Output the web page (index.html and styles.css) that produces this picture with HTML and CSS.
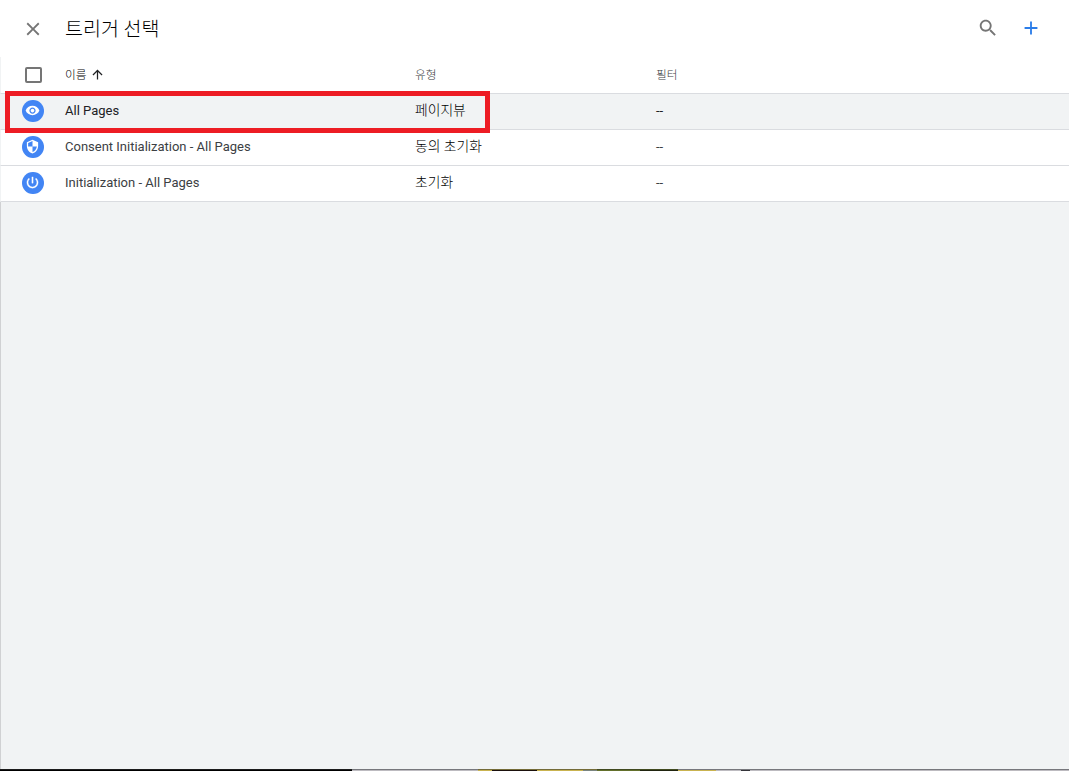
FILE: index.html
```html
<!DOCTYPE html>
<html lang="ko">
<head>
    <meta charset="UTF-8">
    <meta name="viewport" content="width=device-width, initial-scale=1.0">
    <title>트리거 선택</title>
    <link rel="stylesheet" href="styles.css">
</head>
<body>
    <div class="sheet">
        <header class="toolbar">
            <svg class="close" viewBox="0 0 24 24"><path d="M19 6.41L17.59 5 12 10.59 6.41 5 5 6.41 10.59 12 5 17.59 6.41 19 12 13.41 17.59 19 19 17.59 13.41 12z"/></svg>
            <h1>트리거 선택</h1>
            <svg class="search" viewBox="0 0 24 24"><path d="M15.5 14h-.79l-.28-.27C15.41 12.59 16 11.11 16 9.5 16 5.91 13.09 3 9.5 3S3 5.91 3 9.5 5.91 16 9.5 16c1.61 0 3.09-.59 4.23-1.57l.27.28v.79l5 4.99L20.49 19l-4.99-5zm-6 0C7.01 14 5 11.99 5 9.5S7.01 5 9.5 5 14 7.01 14 9.5 11.99 14 9.5 14z"/></svg>
            <svg class="add" viewBox="0 0 24 24"><path d="M19 13h-6v6h-2v-6H5v-2h6V5h2v6h6v2z"/></svg>
        </header>

        <div class="row head">
            <span class="checkbox"></span>
            <span class="sorted"><span>이름</span>
                <svg class="arrow" viewBox="0 0 24 24"><path d="M4 12l1.41 1.41L11 7.83V20h2V7.83l5.58 5.59L20 12l-8-8-8 8z"/></svg>
            </span>
            <span class="label">유형</span>
            <span class="label">필터</span>
        </div>
        <div class="row selected">
            <span class="badge">
                <svg viewBox="0 0 24 24"><path d="M12 4.500C7 4.500 2.730 7.610 1 12c1.730 4.390 6 7.500 11 7.500s9.270-3.110 11-7.500c-1.730-4.390-6-7.500-11-7.500zM12 17c-2.760 0-5-2.240-5-5s2.240-5 5-5 5 2.240 5 5-2.240 5-5 5zm0-8c-1.660 0-3 1.340-3 3s1.340 3 3 3 3-1.340 3-3-1.340-3-3-3z"/></svg>
            </span>
            <span>All Pages</span>
            <span class="type">페이지뷰</span>
            <span>--</span>
            <div class="highlight"></div>
        </div>
        <div class="row">
            <span class="badge">
                <svg viewBox="0 0 24 24"><path d="M12 1L3 5v6c0 5.550 3.840 10.740 9 12 5.160-1.260 9-6.450 9-12V5l-9-4zm0 10.990h7c-.53 4.120-3.280 7.790-7 8.940V12H5V6.300l7-3.110v8.800z"/></svg>
            </span>
            <span>Consent Initialization - All Pages</span>
            <span class="type">동의 초기화</span>
            <span>--</span>
        </div>
        <div class="row">
            <span class="badge">
                <svg class="power" viewBox="0 0 24 24"><path d="M13 3h-2v10h2V3zm4.830 2.170l-1.420 1.420C17.990 7.860 19 9.810 19 12c0 3.870-3.130 7-7 7s-7-3.130-7-7c0-2.190 1.010-4.140 2.580-5.420L6.170 5.170C4.230 6.820 3 9.260 3 12c0 4.970 4.030 9 9 9s9-4.030 9-9c0-2.740-1.230-5.180-3.170-6.830z"/></svg>
            </span>
            <span>Initialization - All Pages</span>
            <span class="type">초기화</span>
            <span>--</span>
        </div>

        <main class="empty"></main>
        <footer class="edge"></footer>
    </div>
</body>
</html>
```

FILE: styles.css
```css
* { box-sizing: border-box; margin: 0; padding: 0; }
body {
    font-family: Roboto, "Noto Sans CJK KR", sans-serif;
    font-size: 13px;
    color: #3c4043;
    background: #fff;
}
.sheet {
    display: flex;
    flex-direction: column;
    height: 100vh;
    overflow: hidden;
}
svg {
    display: block;
    fill: #757575;
}
.toolbar {
    display: flex;
    align-items: center;
    height: 57px;
    padding: 0 28px 0 22px;
}
.close {
    width: 22px;
    height: 22px;
}
h1 {
    flex: 1;
    margin-left: 21px;
    padding-top: 2px;
    font-size: 19.5px;
    font-weight: 300;
    line-height: 24px;
    color: #000;
}
.search {
    width: 22px;
    height: 22px;
    margin: 0 21px 2px 0;
}
.toolbar .add {
    width: 22px;
    height: 22px;
    margin: 0 -.5px 1px 0;
    fill: #2b7de9;
}
.row {
    position: relative;
    display: grid;
    grid-template-columns: 43px 350px 241px 1fr;
    align-items: center;
    height: 36px;
    padding: 0 0 2px 21px;
    border-bottom: 1px solid #dadce0;
    border-left: 1px solid #f1f3f4;
}
.head {
    height: 37px;
    font-size: 11.7px;
    font-weight: 300;
    color: #3c4043;
}
.label, .sorted span {
    padding-bottom: 2px;
}
.sorted {
    display: flex;
    align-items: center;
    gap: 3px;
    color: #000;
}
.arrow {
    width: 15px;
    height: 15px;
    fill: #202124;
}
.checkbox {
    width: 17px;
    height: 16px;
    margin: 1px 0 0 3px;
    border: 2px solid #757575;
    border-radius: 2px;
}
.selected {
    background: #f1f3f4;
    color: #202124;
}
.type {
    padding-bottom: 2px;
    font-size: 13.8px;
    font-weight: 300;
    line-height: 18px;
    color: #000;
}
.badge {
    display: flex;
    align-items: center;
    justify-content: center;
    width: 21.5px;
    height: 22px;
    border-radius: 50%;
    background: #4285f4;
}
.badge svg {
    width: 15px;
    height: 15px;
    fill: #fff;
}
.badge .power {
    stroke: #fff;
    stroke-width: .5;
}
/* red frame drawn over the chosen trigger */
.highlight {
    position: absolute;
    top: -3px;
    left: 4px;
    width: 485px;
    height: 42px;
    border: 5px solid #ed1c24;
    z-index: 1;
}
.empty {
    flex: 1;
    background: #f1f3f4;
    border-left: 1px solid #d0d1d3;
}
/* sliver of the page behind the sheet */
.edge {
    height: 2px;
    border-top: 1px solid #77777c;
    background: linear-gradient(90deg, #000 352px, #bdbbc0 352px 478px, #c9b350 478px 492px, #1a100c 492px 537px, #c9b350 537px 583px, #7b8580 583px 597px, #63702c 597px 640px, #20240f 640px 678px, #c9b350 678px 716px, #bdbbc0 716px 741px, #34343a 741px 750px, #bdbbc0 750px);
    border-image: linear-gradient(90deg, #1c1c1c 352px, #77777c 352px 478px, #746b38 478px 597px, #414a20 597px 678px, #77777c 678px) 1;
}
```
